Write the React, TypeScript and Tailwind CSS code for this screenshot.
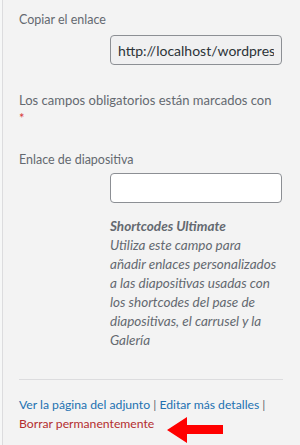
export default function App() {
  const font = { fontFamily: 'Lato, "Noto Sans", sans-serif' };

  return (
    <div className="w-[300px] h-[445px] overflow-hidden bg-[#f6f7f7] pl-[2px]" style={font}>
      <div className="relative h-full border-l border-[#dcdcde] bg-[#f3f3f3] pl-4 pr-[17px] text-[13px] text-[#646970]">
        {/* Copy link */}
        <div className="pt-[11px] text-[12.5px] leading-[18px]">Copiar el enlace</div>
        <div className="ml-[91px] mt-[6px]">
          <input
            readOnly
            value="http://localhost/wordpress/wp-content/uploads/2020/03/slide.jpg"
            className="w-[172px] h-[30px] rounded-[4px] border border-[#8c8f94] bg-[#f0f0f1] px-[7px] text-[14px] text-[#2c3338] outline-none"
          />
        </div>

        {/* Required message */}
        <p className="mt-[26px] leading-[18px]">
          Los campos obligatorios están marcados con
          <br />
          <span className="text-[#d63638]">*</span>
        </p>

        {/* Slide link */}
        <div className="mt-[24px] text-[12.5px] leading-[18px]">Enlace de diapositiva</div>
        <div className="ml-[91px] mt-[4px] w-[172px]">
          <input className="w-[172px] h-[30px] rounded-[4px] border border-[#8c8f94] bg-white px-2 outline-none" />
          <p className="mt-[14px] text-[13.5px] italic leading-[19px]">
            <strong>Shortcodes Ultimate</strong>
            <br />
            Utiliza este campo para
            <br />
            añadir enlaces personalizados
            <br />
            a las diapositivas usadas con
            <br />
            los shortcodes del pase de
            <br />
            diapositivas, el carrusel y la
            <br />
            Galería
          </p>
        </div>

        {/* Actions */}
        <div className="mt-[29px] border-t border-[#dcdcde] pt-[15px] text-[12.2px] leading-[19px]">
          <a className="text-[#2271b1]">Ver la página del adjunto</a>
          <span> | </span>
          <a className="text-[#2271b1]">Editar más detalles</a>
          <span> |</span>
          <br />
          <a className="text-[#b32d2e]">Borrar permanentemente</a>
        </div>

        {/* Red arrow annotation */}
        <svg className="absolute left-[164px] top-[417px]" width="58" height="26" viewBox="0 0 58 26">
          <polygon points="0,13 20,0 20,8 56,8 56,17 20,17 20,26" fill="#ff0000" />
        </svg>
      </div>
    </div>
  );
}
